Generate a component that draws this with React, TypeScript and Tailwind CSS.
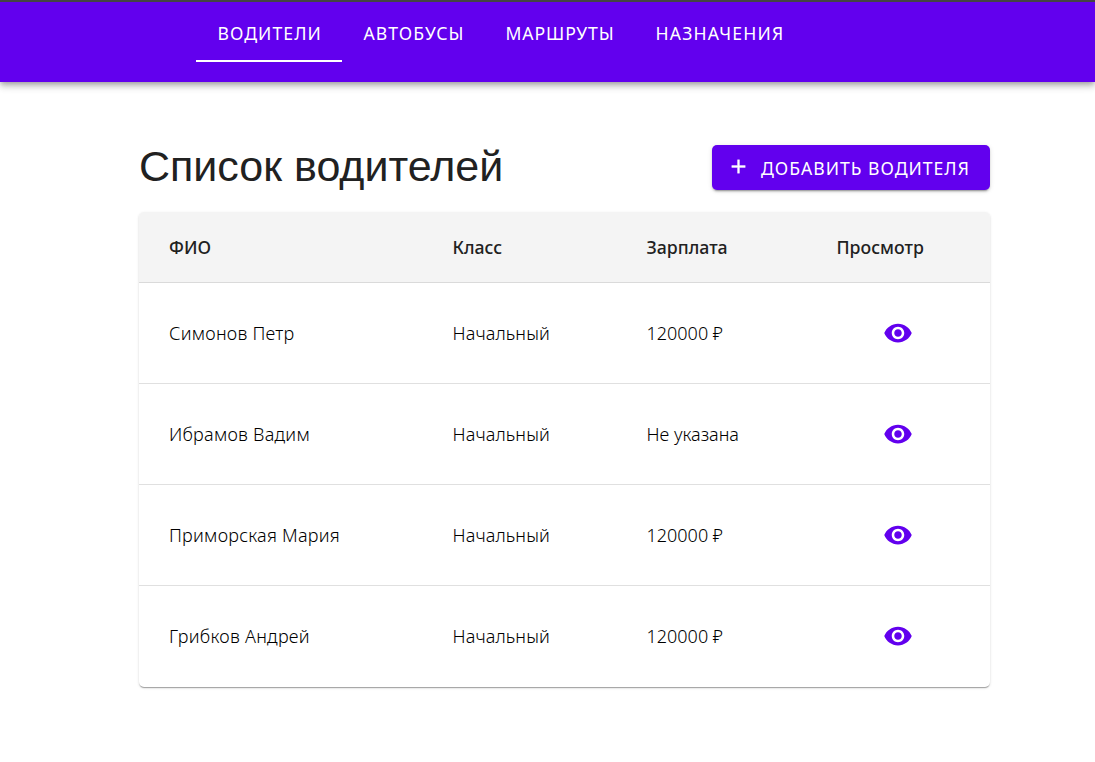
const tabs = [
  { label: "ВОДИТЕЛИ", box: "w-[146px] pl-[21.5px] tracking-[1.05px]", active: true },
  { label: "АВТОБУСЫ", box: "w-[143px] pl-[21.5px] tracking-[1.05px]", active: false },
  { label: "МАРШРУТЫ", box: "w-[150px] pl-[20.5px] tracking-[0.9px]", active: false },
  { label: "НАЗНАЧЕНИЯ", box: "w-[171px] pl-[20.5px] tracking-[1.2px]", active: false },
];

const drivers = [
  { name: "Симонов Петр", grade: "Начальный", salary: "120000 ₽" },
  { name: "Ибрамов Вадим", grade: "Начальный", salary: "Не указана" },
  { name: "Приморская Мария", grade: "Начальный", salary: "120000 ₽" },
  { name: "Грибков Андрей", grade: "Начальный", salary: "120000 ₽" },
];

const columns = "grid grid-cols-[283.5px_194px_190px_1fr] pl-[30px] items-center";

function EyeIcon() {
  return (
    <svg viewBox="0 0 24 24" className="h-[30px] w-[30px] fill-[#6200ee]">
      <path d="M12 4.5C7 4.5 2.73 7.61 1 12c1.73 4.39 6 7.5 11 7.5s9.27-3.11 11-7.5c-1.73-4.39-6-7.5-11-7.5zM12 17c-2.76 0-5-2.24-5-5s2.24-5 5-5 5 2.24 5 5-2.24 5-5 5zm0-8c-1.66 0-3 1.34-3 3s1.34 3 3 3 3-1.34 3-3-1.34-3-3-3z" />
    </svg>
  );
}

export default function App() {
  return (
    <div className="h-[762px] overflow-hidden bg-white font-['Noto_Sans',sans-serif] text-[#212121]">
      <header className="h-[82px] border-t-2 border-[#444444] bg-[#6200ee] pl-[196px] text-white shadow-[0_2px_5px_-1px_rgba(0,0,0,0.25),0_5px_6px_rgba(0,0,0,0.14),0_1px_12px_rgba(0,0,0,0.12)]">
        <nav className="flex">
          {tabs.map((tab) => (
            <a
              key={tab.label}
              className={`h-[60px] shrink-0 border-b-2 pt-[19px] text-[17.6px] leading-[24px] whitespace-nowrap ${tab.box} ${tab.active ? "border-white" : "border-transparent"}`}
            >
              {tab.label}
            </a>
          ))}
        </nav>
      </header>

      <main className="ml-[139px] w-[851px] pt-[63px]">
        <div className="flex h-[45px] items-center justify-between">
          <h1 className="-mt-[2px] font-['Liberation_Sans',sans-serif] text-[43px] leading-[45px] whitespace-nowrap">Список водителей</h1>
          <button className="flex h-[45px] w-[278px] items-center rounded-[5px] bg-[#6200ee] pl-[15px] text-[17.6px] tracking-[1px] whitespace-nowrap text-white shadow-[0_3px_1px_-2px_rgba(0,0,0,0.2),0_2px_2px_rgba(0,0,0,0.14),0_1px_5px_rgba(0,0,0,0.12)]">
            <svg viewBox="0 0 24 24" className="-mt-[3px] mr-[11px] h-[23px] w-[23px] fill-white stroke-white stroke-[0.4]">
              <path d="M19 13h-6v6h-2v-6H5v-2h6V5h2v6h6v2z" />
            </svg>
            <span className="pt-[2px]">ДОБАВИТЬ ВОДИТЕЛЯ</span>
          </button>
        </div>

        <section className="mt-[22px] overflow-hidden rounded-[5px] bg-white text-[18px] shadow-[0_2px_1px_-1px_rgba(0,0,0,0.2),0_1px_1px_rgba(0,0,0,0.14),0_1px_3px_rgba(0,0,0,0.12)]">
          <div className={`${columns} h-[71px] border-b border-[#dadada] bg-[#f4f4f4] text-[17.7px] font-medium`}>
            <span>ФИО</span>
            <span>Класс</span>
            <span>Зарплата</span>
            <span>Просмотр</span>
          </div>
          {drivers.map((driver) => (
            <div key={driver.name} className={`${columns} h-[101px] border-b border-[#e0e0e0] font-light text-black last:border-b-0 last:pb-px`}>
              <span className="tracking-[0.25px]">{driver.name}</span>
              <span className="tracking-[0.12px]">{driver.grade}</span>
              <span>{driver.salary}</span>
              <span className="pl-[46.5px]">
                <EyeIcon />
              </span>
            </div>
          ))}
        </section>
      </main>
    </div>
  );
}
